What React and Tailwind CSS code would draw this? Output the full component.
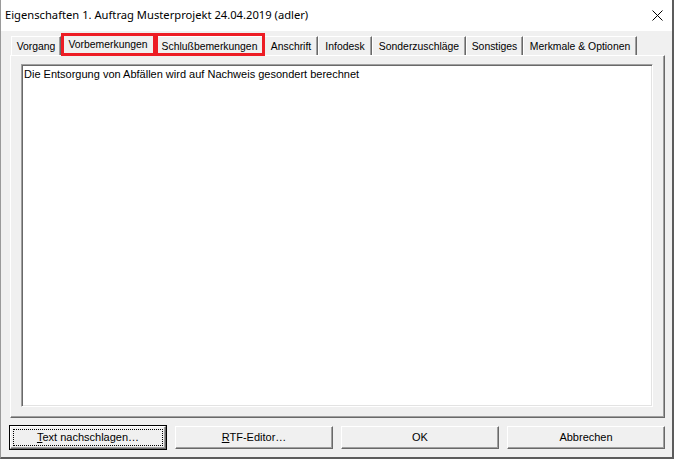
import React from "react";

const tabs = [
  { label: "Vorgang", w: "w-[50px]" },
  { label: "Vorbemerkungen", w: "w-[94px]", selected: true },
  { label: "Schlußbemerkungen", w: "w-[109px]" },
  { label: "Anschrift", w: "w-[54px]" },
  { label: "Infodesk", w: "w-[54px]" },
  { label: "Sonderzuschläge", w: "w-[94px]" },
  { label: "Sonstiges", w: "w-[57px]" },
  { label: "Merkmale & Optionen", w: "w-[114px]" },
];

function Tab({ label, w, selected }) {
  if (selected) {
    return (
      <div
        className={`${w} h-[23px] relative z-10 -mb-[1px] bg-[#f0f0f0] border-t border-l border-t-white border-l-white border-r border-r-[#696969] shadow-[inset_-1px_0_0_#a0a0a0] flex items-start justify-center pt-[3px] whitespace-nowrap`}
      >
        {label}
      </div>
    );
  }
  return (
    <div
      className={`${w} h-[19px] bg-[#f0f0f0] border-t border-l border-t-white border-l-white border-r border-r-[#696969] shadow-[inset_-1px_0_0_#a0a0a0] flex items-center justify-center pt-[1px] whitespace-nowrap`}
    >
      {label}
    </div>
  );
}

function Button({ children, isDefault }) {
  if (isDefault) {
    return (
      <div className="w-[158px] h-[25px] border border-black">
        <div className="w-full h-full bg-[#f0f0f0] border-t border-l border-t-white border-l-white border-r border-b border-r-[#696969] border-b-[#696969] shadow-[inset_-1px_-1px_0_#a0a0a0] p-[2px]">
          <div className="w-full h-full border border-dotted border-black flex items-center justify-center">
            {children}
          </div>
        </div>
      </div>
    );
  }
  return (
    <div className="w-[158px] h-[23px] bg-[#f0f0f0] border-t border-l border-t-white border-l-white border-r border-b border-r-[#696969] border-b-[#696969] shadow-[inset_-1px_-1px_0_#a0a0a0] flex items-center justify-center">
      {children}
    </div>
  );
}

export default function App() {
  return (
    <div className="w-[674px] h-[459px] bg-[#f0f0f0] flex flex-col border-l border-l-[#9a9a9a] border-r-2 border-r-[#5c5c5c] border-b-2 border-b-[#5c5c5c] font-['Liberation_Sans',sans-serif] text-[11px] text-black overflow-hidden">
      {/* Title bar */}
      <div className="h-[31px] shrink-0 bg-white flex items-center justify-between pl-[4px] pr-[8px] font-['Noto_Sans',sans-serif] text-[11.2px]">
        <span>Eigenschaften 1. Auftrag Musterprojekt 24.04.2019 (adler)</span>
        <svg width="11" height="11" viewBox="0 0 11 11" className="mr-[1px]">
          <path d="M0.5 0.5 L10.5 10.5 M10.5 0.5 L0.5 10.5" stroke="#000" strokeWidth="1" />
        </svg>
      </div>

      {/* Tabs */}
      <div className="relative h-[22px] mt-[2px] pl-[10px] flex items-end shrink-0 text-[10.4px]">
        {tabs.map((t) => (
          <Tab key={t.label} {...t} />
        ))}
        <div className="absolute left-[60px] top-0 w-[95px] h-[23px] border-[3px] border-[#ed1c24] z-20 pointer-events-none" />
        <div className="absolute left-[154px] top-0 w-[110px] h-[23px] border-[3px] border-[#ed1c24] z-20 pointer-events-none" />
      </div>

      {/* Panel */}
      <div className="ml-[9px] w-[655px] h-[363px] shrink-0 border-t border-l border-t-white border-l-white border-r border-b border-r-[#696969] border-b-[#696969] shadow-[inset_-1px_-1px_0_#a0a0a0] pl-[10px] pt-[8px]">
        <div className="w-[632px] h-[343px] bg-white border-t border-l border-t-[#a0a0a0] border-l-[#a0a0a0] border-r border-b border-r-white border-b-white shadow-[inset_1px_1px_0_#696969,inset_-1px_-1px_0_#e3e3e3] pl-[2px] pt-[1px]">
          Die Entsorgung von Abfällen wird auf Nachweis gesondert berechnet
        </div>
      </div>

      {/* Buttons */}
      <div className="mt-[7px] ml-[8px] flex items-center gap-[8px]">
        <Button isDefault>
          <span>
            <span className="underline">T</span>ext nachschlagen…
          </span>
        </Button>
        <Button>
          <span>
            <span className="underline">R</span>TF-Editor…
          </span>
        </Button>
        <Button>OK</Button>
        <Button>Abbrechen</Button>
      </div>
    </div>
  );
}
